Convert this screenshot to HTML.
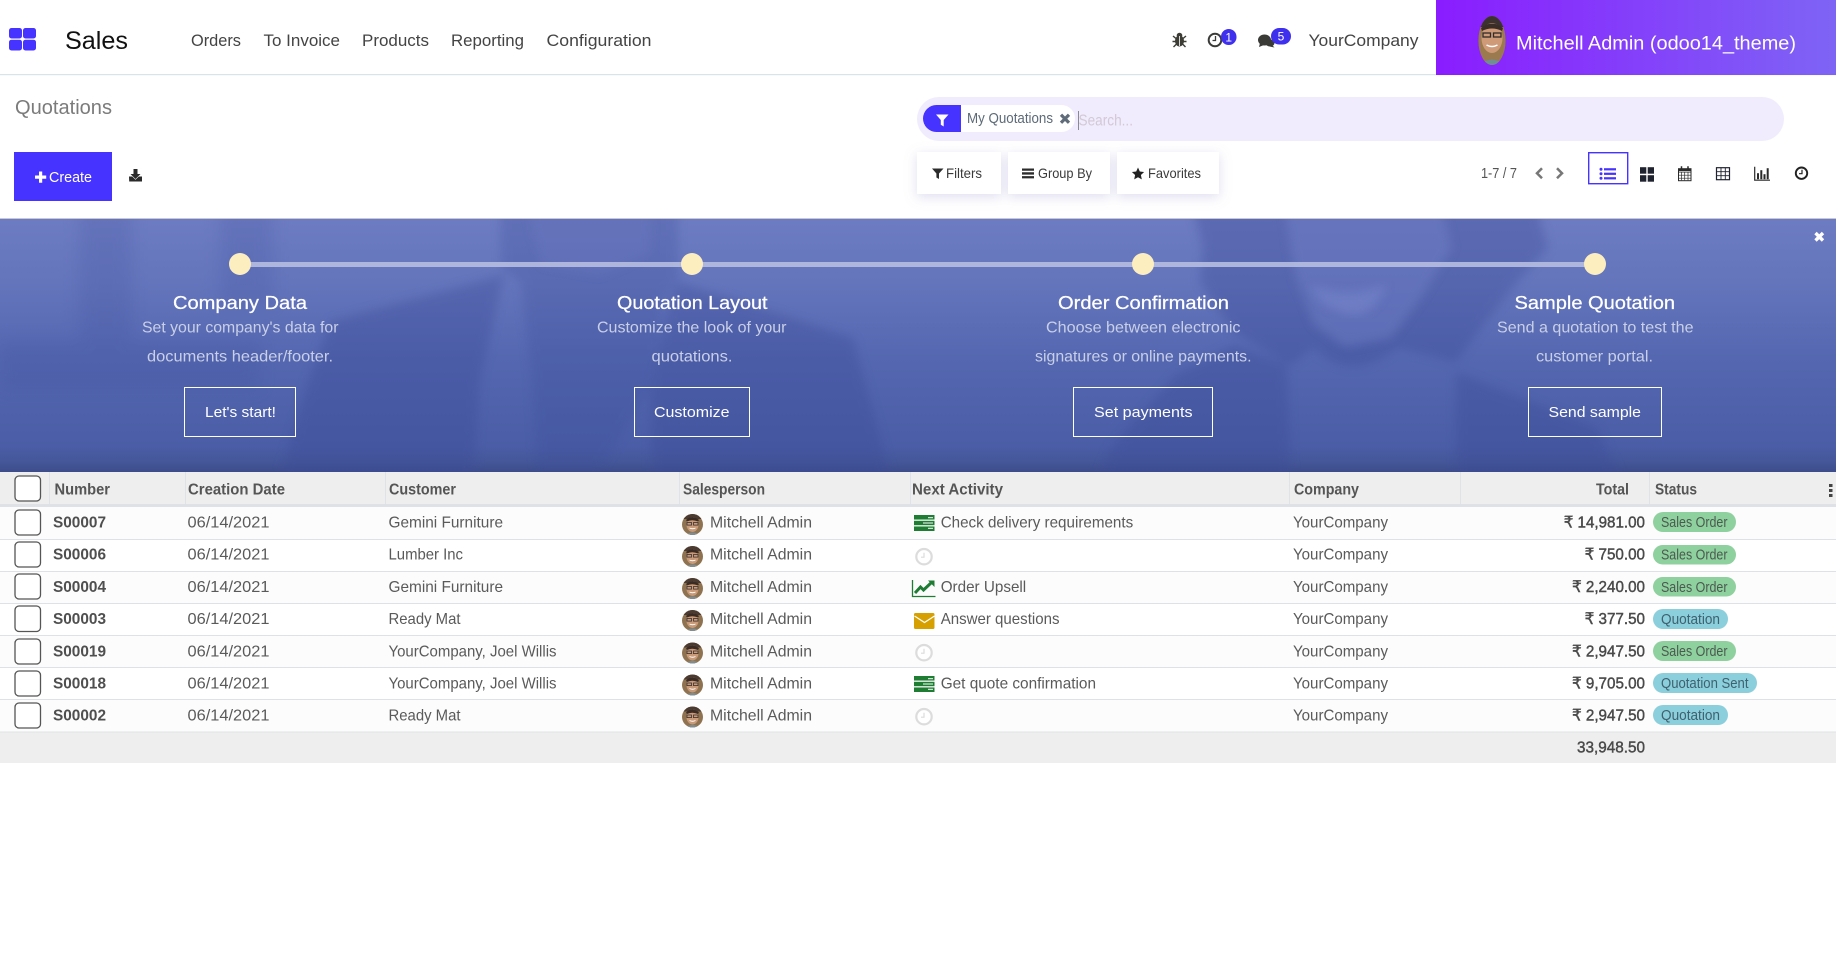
<!DOCTYPE html>
<html lang="en"><head><meta charset="utf-8"><title>Quotations - Sales</title>
<style>
html,body{margin:0;padding:0;background:#fff;width:1836px;height:970px;overflow:hidden}
svg{display:block;font-family:"Liberation Sans",sans-serif}
.menu{font-size:16.5px;fill:#444}
.bt{font-size:18.5px;fill:#fff;stroke:#fff;stroke-width:.25}
.bd{font-size:16px;fill:#c9cfe6}
.bb{font-size:15px;fill:#fff}
.th{font-size:15.5px;font-weight:bold;fill:#555}
.td{font-size:16px;fill:#5a5a5a}
.no{font-size:15.5px;font-weight:bold;fill:#4f4f4f}
.tot{font-size:16px;fill:#4a4a4a;stroke:#4a4a4a;stroke-width:.45}
.bdg{font-size:14.5px;fill:#4b5a50}
.bdq{font-size:14.5px;fill:#3f6170}
.cb{fill:#fff;stroke:#555;stroke-width:1.3}
.fb{font-size:14px;fill:#3a3a3a}
</style></head><body>
<svg width="1836" height="970" viewBox="0 0 1836 970" xmlns="http://www.w3.org/2000/svg">
<defs>
<linearGradient id="pg" x1="0" x2="1" y1="0" y2="0"><stop offset="0" stop-color="#8a1cff"/><stop offset="1" stop-color="#7e64f5"/></linearGradient>
<linearGradient id="bg" x1="0" x2="0" y1="0" y2="1"><stop offset="0" stop-color="#6d7cc2"/><stop offset=".25" stop-color="#6475bc"/><stop offset=".55" stop-color="#5467b0"/><stop offset=".9" stop-color="#4a5da6"/><stop offset=".96" stop-color="#455799"/><stop offset="1" stop-color="#3d4d8b"/></linearGradient>
<filter id="bl" x="-10%" y="-10%" width="120%" height="120%"><feGaussianBlur stdDeviation="5"/></filter>
<filter id="bl2" x="-10%" y="-10%" width="120%" height="120%"><feGaussianBlur stdDeviation="8"/></filter>
<filter id="sh" x="-30%" y="-30%" width="160%" height="170%"><feDropShadow dx="0" dy="3" stdDeviation="6" flood-color="#8a86c8" flood-opacity=".28"/></filter>
<clipPath id="bc"><rect x="0" y="219" width="1836" height="253"/></clipPath>
<clipPath id="ua"><ellipse cx="1492" cy="40.5" rx="13.6" ry="24.5"/></clipPath>
<clipPath id="sa"><circle cx="10.5" cy="10.5" r="10.5"/></clipPath>
<g id="av"><g clip-path="url(#sa)"><rect width="21" height="21" fill="#8f7350"/><rect x="0" y="0" width="21" height="5" fill="#4a3a30"/><ellipse cx="10.5" cy="10.5" rx="6" ry="7.5" fill="#c99a78"/><path d="M4 6Q10 0 17 6L16 7.500Q10 5 5 7.500Z" fill="#3a2c25"/><rect x="5" y="8.500" width="4.500" height="2.600" fill="none" stroke="#3a3030" stroke-width=".8"/><rect x="11.500" y="8.500" width="4.500" height="2.600" fill="none" stroke="#3a3030" stroke-width=".8"/><path d="M7.500 14q3 1.500 6 0" stroke="#fff" stroke-width=".9" fill="none"/><path d="M3 21q8-5 15 0z" fill="#7f8d92"/></g></g>
<g id="clk"><circle cx="0" cy="0" r="7.700" fill="#fff" stroke="#dcdcdc" stroke-width="2.200"/><path d="M0-4V0.500H-3" fill="none" stroke="#dcdcdc" stroke-width="1.200"/></g>
<g id="stack"><rect x="0" y="0" width="20.500" height="16" fill="#1e7d33"/><path d="M0 5.200h20.500M0 10.800h20.500" stroke="#e8f2ea" stroke-width="1.300"/><path d="M14 2.600h5M9 8h10M14 13.400h5" stroke="#cfe3d4" stroke-width="1.300"/></g>
</defs>

<!-- navbar -->
<rect x="0" y="74" width="1836" height="1.200" fill="#d8e3ea"/>
<g fill="#4733ff"><rect x="9" y="28" width="13" height="10.500" rx="2.500"/><rect x="23" y="28" width="13" height="10.500" rx="2.500"/><rect x="9" y="39.700" width="13" height="10.800" rx="2.500"/><rect x="23" y="39.700" width="13" height="10.800" rx="2.500"/></g>
<text x="65" y="49" font-size="25" fill="#111" textLength="63" lengthAdjust="spacingAndGlyphs">Sales</text>
<text class="menu" x="191" y="46" textLength="50" lengthAdjust="spacingAndGlyphs">Orders</text>
<text class="menu" x="263.500" y="46" textLength="76.500" lengthAdjust="spacingAndGlyphs">To Invoice</text>
<text class="menu" x="362" y="46" textLength="67" lengthAdjust="spacingAndGlyphs">Products</text>
<text class="menu" x="451" y="46" textLength="73" lengthAdjust="spacingAndGlyphs">Reporting</text>
<text class="menu" x="546.500" y="46" textLength="105" lengthAdjust="spacingAndGlyphs">Configuration</text>
<!-- bug -->
<g fill="#3d3d36"><ellipse cx="1179.500" cy="41" rx="4.500" ry="5.500"/><circle cx="1179.500" cy="35.500" r="2.800"/><path d="M1173 36l3 2.500M1186 36l-3 2.500M1172.500 41.500h3.500M1186.500 41.500h-3.500M1173.500 47l3-3M1185.500 47l-3-3" stroke="#3d3d36" stroke-width="1.400"/></g>
<path d="M1179.500 36v10" stroke="#fff" stroke-width=".8"/>
<!-- clock -->
<circle cx="1215" cy="40" r="6.300" fill="#fff" stroke="#3a3a36" stroke-width="2"/><path d="M1215.500 36v4.500h-3" stroke="#3a3a36" stroke-width="1.300" fill="none"/>
<rect x="1221" y="29" width="15.500" height="16" rx="7.700" fill="#3f30ee"/>
<text x="1228.700" y="41.500" font-size="12" fill="#fff" text-anchor="middle">1</text>
<!-- chat -->
<g fill="#3a3a36"><ellipse cx="1264.500" cy="40" rx="6.500" ry="5.500"/><path d="M1260 43l-1 4 5-2z"/><ellipse cx="1270" cy="43" rx="4.500" ry="3.500"/><path d="M1272 45l2.500 2.500-5-1z"/></g>
<rect x="1271" y="28" width="20" height="16.500" rx="8.200" fill="#3f30ee"/>
<text x="1281" y="40.500" font-size="12" fill="#fff" text-anchor="middle">5</text>
<text class="menu" x="1308.500" y="46" textLength="110" lengthAdjust="spacingAndGlyphs">YourCompany</text>
<rect x="1436" y="0" width="400" height="75" fill="url(#pg)"/>
<g clip-path="url(#ua)"><rect x="1477" y="15" width="30" height="52" fill="#9a7a4e"/><rect x="1477" y="15" width="30" height="12" fill="#3c3330"/><ellipse cx="1492" cy="38" rx="10.500" ry="15" fill="#cf9a78"/><path d="M1481 28q11-9 22 0l-1 3q-10-5-20 0z" fill="#3a2d28"/><rect x="1483" y="33" width="7.500" height="4" fill="none" stroke="#2f2b2c" stroke-width="1.300"/><rect x="1493.500" y="33" width="7.500" height="4" fill="none" stroke="#2f2b2c" stroke-width="1.300"/><path d="M1486.500 45q5.500 3 11 0" stroke="#fff" stroke-width="1.500" fill="none"/><path d="M1478 66q14-13 28 0z" fill="#6f8f92"/></g>
<text x="1516" y="49.500" font-size="19.500" fill="#fff" textLength="280" lengthAdjust="spacingAndGlyphs">Mitchell Admin (odoo14_theme)</text>

<!-- control panel -->
<text x="15" y="114" font-size="20.500" fill="#7b7b7b" textLength="97" lengthAdjust="spacingAndGlyphs">Quotations</text>
<rect x="14" y="152" width="98" height="49" fill="#4733ff"/>
<path d="M39 171.500h3.200v4h4v3.200h-4v4h-3.200v-4h-4v-3.200h4z" fill="#fff"/>
<text x="49" y="182" font-size="14.500" fill="#fff" textLength="43" lengthAdjust="spacingAndGlyphs">Create</text>
<path d="M133.500 169h4v5h3l-5 5-5-5h3zM129 176.500h3.200l3.300 3.300 3.300-3.300h3.200v5h-12.800z" fill="#2a2a2a"/>

<rect x="917" y="97" width="867" height="44" rx="22" fill="#f0ecfd"/>
<path d="M961 105h-24.500a13.500 13.500 0 0 0 0 27h24.500z" fill="#4733ff"/>
<path d="M961 105h100.500a13.500 13.500 0 0 1 0 27h-100.500z" fill="#fff"/>
<path d="M936 114.500h12.500l-4.800 5.500v6.500l-2.900-1.700v-4.800z" fill="#fff"/>
<text x="967" y="122.800" font-size="14.500" fill="#5d6a78" textLength="86" lengthAdjust="spacingAndGlyphs">My Quotations</text>
<path d="M1061 114.800l8 8M1069 114.800l-8 8" stroke="#5f6b78" stroke-width="3.200"/>
<rect x="1078" y="111" width="1" height="19" fill="#8a8a92"/>
<text x="1078.500" y="125.500" font-size="15.500" fill="#d3c9d6" textLength="54.500" lengthAdjust="spacingAndGlyphs">Search...</text>

<g fill="#fff" filter="url(#sh)"><rect x="917" y="152" width="84" height="42"/><rect x="1008" y="152" width="102" height="42"/><rect x="1117" y="152" width="102" height="42"/></g>
<path d="M932 168.500h11.500l-4.500 5v5.500l-2.600-1.500v-4z" fill="#2c2c2c"/>
<text class="fb" x="946" y="178" textLength="36" lengthAdjust="spacingAndGlyphs">Filters</text>
<path d="M1022 168.500h12v2.300h-12zM1022 172.300h12v2.300h-12zM1022 176.100h12v2.300h-12z" fill="#2c2c2c"/>
<text class="fb" x="1038" y="178" textLength="54" lengthAdjust="spacingAndGlyphs">Group By</text>
<path d="M1138 167.500l1.800 4 4.300.5-3.200 3 .9 4.400-3.800-2.200-3.800 2.200.9-4.400-3.200-3 4.300-.5z" fill="#222"/>
<text class="fb" x="1148" y="178" textLength="53" lengthAdjust="spacingAndGlyphs">Favorites</text>

<text x="1481" y="178" font-size="14.500" fill="#555" textLength="36" lengthAdjust="spacingAndGlyphs">1-7 / 7</text>
<rect x="1588.700" y="152.700" width="39" height="31" fill="#fff" stroke="#4733ff" stroke-width="1.400"/>
<g transform="translate(0,-.8)">
<path d="M1542 169l-5 5 5 5M1557 169l5 5-5 5" fill="none" stroke="#777" stroke-width="2.500"/>
<g fill="#4733ff"><rect x="1604" y="169" width="12" height="2.200"/><rect x="1604" y="173.500" width="12" height="2.200"/><rect x="1604" y="178" width="12" height="2.200"/><circle cx="1601" cy="170" r="1.500"/><circle cx="1601" cy="174.500" r="1.500"/><circle cx="1601" cy="179" r="1.500"/></g>
<g fill="#1f2330"><rect x="1640" y="168" width="6.300" height="6.500"/><rect x="1647.700" y="168" width="6.300" height="6.500"/><rect x="1640" y="176" width="6.300" height="6.500"/><rect x="1647.700" y="176" width="6.300" height="6.500"/></g>
<g fill="none" stroke="#2a2a2a"><rect x="1678.500" y="169.500" width="12.500" height="12" stroke-width="1"/><path d="M1678.500 173h12.500M1678.500 176h12.500M1678.500 179h12.500M1681.500 173v8M1684.700 173v8M1688 173v8" stroke-width=".7"/><path d="M1681.500 167v4M1688 167v4" stroke-width="1.500"/></g>
<rect x="1678.500" y="169.500" width="12.500" height="2.500" fill="#2a2a2a"/>
<g fill="none" stroke="#1f2330"><rect x="1716.500" y="168.500" width="13" height="12" stroke-width="1.200"/><path d="M1716.500 172.500h13M1716.500 176.500h13M1721 168.500v12M1725.300 168.500v12" stroke-width=".9"/></g>
<path d="M1754.700 167.500v13.500h15.300" fill="none" stroke="#2a2a2a" stroke-width="1.200"/>
<g fill="#2a2a2a"><rect x="1757" y="174" width="2" height="6"/><rect x="1760.300" y="171" width="2" height="9"/><rect x="1763.500" y="175" width="2" height="5"/><rect x="1766.700" y="169" width="2" height="11"/></g>
<circle cx="1801.500" cy="174" r="5.700" fill="#fff" stroke="#222" stroke-width="1.900"/><path d="M1802 170.500v4h-3" fill="none" stroke="#222" stroke-width="1.200"/>
</g>

<!-- banner -->
<rect x="0" y="218" width="1836" height="1" fill="#c9c9cf"/>
<rect x="0" y="219" width="1836" height="253" fill="url(#bg)"/>
<g clip-path="url(#bc)">
<g filter="url(#bl2)" fill="#3f4f9c" opacity=".2">
<rect x="79" y="205" width="53" height="140"/>
<rect x="0" y="340" width="260" height="50"/>
<rect x="220" y="205" width="53" height="100"/>
</g>
<g filter="url(#bl)" fill="#3c4b98" opacity=".36">
<path d="M500 205h178v75l-15 20-8 80-56 92h-62l-6-100-10-90-20-15z" opacity=".7"/>
<path d="M504 275L330 322 308 382 277 485H473L480 380 500 290z"/>
<path d="M678 282L853 338 893 485H652L650 390 670 300z"/>
<path d="M1192 205L1203 248 1200 282 1234 332 1290 365 1314 348 1398 348 1456 362 1483 325 1517 282 1548 248 1536 205z"/>
<path d="M1176 375L1111 448 1095 485H1291L1287 365 1234 345z"/>
<path d="M1456 372L1597 428 1624 485H1456z"/>
<path d="M1314 348Q1350 385 1398 348L1390 335 1330 335z"/>
</g>
<g filter="url(#bl)" fill="#7786cc" opacity=".4">
<path d="M1284 205H1441L1452 248 1421 298 1391 338 1345 347 1314 325 1295 275z"/>
<path d="M527 205H652L650 255 600 275 540 265z" opacity=".5"/>
</g>
<path d="M1310 285Q1350 300 1387 284 1370 325 1340 312 1318 305 1310 285z" fill="#7f8dd0" opacity=".45" filter="url(#bl)"/>
</g>
<rect x="240" y="262" width="1355" height="5" fill="#b5bce0" opacity=".92"/>
<g fill="#fdeec0"><circle cx="240" cy="264" r="11"/><circle cx="692" cy="264" r="11"/><circle cx="1143" cy="264" r="11"/><circle cx="1595" cy="264" r="11"/></g>
<text class="bt" x="173" y="309" textLength="134" lengthAdjust="spacingAndGlyphs">Company Data</text>
<text class="bt" x="617" y="309" textLength="150.500" lengthAdjust="spacingAndGlyphs">Quotation Layout</text>
<text class="bt" x="1058" y="309" textLength="171" lengthAdjust="spacingAndGlyphs">Order Confirmation</text>
<text class="bt" x="1514.500" y="309" textLength="160.500" lengthAdjust="spacingAndGlyphs">Sample Quotation</text>
<text class="bd" x="142" y="332.500" textLength="196.500" lengthAdjust="spacingAndGlyphs">Set your company's data for</text>
<text class="bd" x="147" y="361.500" textLength="186" lengthAdjust="spacingAndGlyphs">documents header/footer.</text>
<text class="bd" x="597" y="332.500" textLength="189.500" lengthAdjust="spacingAndGlyphs">Customize the look of your</text>
<text class="bd" x="651.500" y="361.500" textLength="81" lengthAdjust="spacingAndGlyphs">quotations.</text>
<text class="bd" x="1046" y="332.500" textLength="194.500" lengthAdjust="spacingAndGlyphs">Choose between electronic</text>
<text class="bd" x="1035" y="361.500" textLength="216.500" lengthAdjust="spacingAndGlyphs">signatures or online payments.</text>
<text class="bd" x="1497" y="332.500" textLength="196.500" lengthAdjust="spacingAndGlyphs">Send a quotation to test the</text>
<text class="bd" x="1536" y="361.500" textLength="117" lengthAdjust="spacingAndGlyphs">customer portal.</text>
<g fill="none" stroke="#fff" stroke-width="1"><rect x="184.500" y="387.500" width="111" height="49"/><rect x="634.500" y="387.500" width="115" height="49"/><rect x="1073.500" y="387.500" width="139" height="49"/><rect x="1528.500" y="387.500" width="133" height="49"/></g>
<text class="bb" x="205" y="417" textLength="71" lengthAdjust="spacingAndGlyphs">Let's start!</text>
<text class="bb" x="654" y="417" textLength="75.500" lengthAdjust="spacingAndGlyphs">Customize</text>
<text class="bb" x="1094" y="417" textLength="98.500" lengthAdjust="spacingAndGlyphs">Set payments</text>
<text class="bb" x="1548.500" y="417" textLength="92.500" lengthAdjust="spacingAndGlyphs">Send sample</text>
<path d="M1815.500 233l7.500 7.500M1823 233l-7.500 7.500" stroke="#fff" stroke-width="3.400"/>

<!-- table -->
<rect x="0" y="472" width="1836" height="32" fill="#eeeeee"/>
<rect x="0" y="504" width="1836" height="3" fill="#dee2e6"/>
<g fill="#dfe2e6"><rect x="49" y="472" width="1" height="32"/><rect x="185" y="472" width="1" height="32"/><rect x="385" y="472" width="1" height="32"/><rect x="679" y="472" width="1" height="32"/><rect x="910" y="472" width="1" height="32"/><rect x="1289" y="472" width="1" height="32"/><rect x="1460" y="472" width="1" height="32"/><rect x="1649" y="472" width="1" height="32"/></g>
<rect x="0" y="507" width="1836" height="32" fill="#fcfcfc"/>
<rect x="0" y="571" width="1836" height="32" fill="#fcfcfc"/>
<rect x="0" y="635" width="1836" height="32" fill="#fcfcfc"/>
<rect x="0" y="699" width="1836" height="33" fill="#fcfcfc"/>
<g fill="#dee2e6"><rect x="0" y="539" width="1836" height="1"/><rect x="0" y="571" width="1836" height="1"/><rect x="0" y="603" width="1836" height="1"/><rect x="0" y="635" width="1836" height="1"/><rect x="0" y="667" width="1836" height="1"/><rect x="0" y="699" width="1836" height="1"/></g>
<rect x="0" y="732.500" width="1836" height="30.500" fill="#eeeeee"/>
<rect x="0" y="731.500" width="1836" height="1" fill="#dee2e6"/>

<g><rect class="cb" x="15" y="476" width="25.500" height="25" rx="4"/><rect class="cb" x="15" y="510" width="25.500" height="25" rx="4"/><rect class="cb" x="15" y="542" width="25.500" height="25" rx="4"/><rect class="cb" x="15" y="574" width="25.500" height="25" rx="4"/><rect class="cb" x="15" y="606" width="25.500" height="25.500" rx="4"/><rect class="cb" x="15" y="639" width="25.500" height="25" rx="4"/><rect class="cb" x="15" y="671" width="25.500" height="25" rx="4"/><rect class="cb" x="15" y="703" width="25.500" height="25" rx="4"/></g>

<text class="th" x="54.500" y="494.500" textLength="55.500" lengthAdjust="spacingAndGlyphs">Number</text>
<text class="th" x="188" y="494.500" textLength="97" lengthAdjust="spacingAndGlyphs">Creation Date</text>
<text class="th" x="389" y="494.500" textLength="67" lengthAdjust="spacingAndGlyphs">Customer</text>
<text class="th" x="683" y="494.500" textLength="82" lengthAdjust="spacingAndGlyphs">Salesperson</text>
<text class="th" x="912" y="494.500" textLength="91" lengthAdjust="spacingAndGlyphs">Next Activity</text>
<text class="th" x="1294" y="494.500" textLength="65" lengthAdjust="spacingAndGlyphs">Company</text>
<text class="th" x="1596" y="494.500" textLength="33" lengthAdjust="spacingAndGlyphs">Total</text>
<text class="th" x="1655" y="494.500" textLength="42" lengthAdjust="spacingAndGlyphs">Status</text>
<g fill="#444"><rect x="1829" y="484" width="3.500" height="3"/><rect x="1829" y="489" width="3.500" height="3"/><rect x="1829" y="494" width="3.500" height="3"/></g>

<g transform="translate(0,-.5)">
<!-- number column -->
<text class="no" x="53" y="528" textLength="53" lengthAdjust="spacingAndGlyphs">S00007</text>
<text class="no" x="53" y="560" textLength="53" lengthAdjust="spacingAndGlyphs">S00006</text>
<text class="no" x="53" y="592.500" textLength="53" lengthAdjust="spacingAndGlyphs">S00004</text>
<text class="no" x="53" y="624.500" textLength="53" lengthAdjust="spacingAndGlyphs">S00003</text>
<text class="no" x="53" y="657" textLength="53" lengthAdjust="spacingAndGlyphs">S00019</text>
<text class="no" x="53" y="689" textLength="53" lengthAdjust="spacingAndGlyphs">S00018</text>
<text class="no" x="53" y="721" textLength="53" lengthAdjust="spacingAndGlyphs">S00002</text>
<!-- dates -->
<text class="td" x="187.500" y="528" textLength="82" lengthAdjust="spacingAndGlyphs">06/14/2021</text>
<text class="td" x="187.500" y="560" textLength="82" lengthAdjust="spacingAndGlyphs">06/14/2021</text>
<text class="td" x="187.500" y="592.500" textLength="82" lengthAdjust="spacingAndGlyphs">06/14/2021</text>
<text class="td" x="187.500" y="624.500" textLength="82" lengthAdjust="spacingAndGlyphs">06/14/2021</text>
<text class="td" x="187.500" y="657" textLength="82" lengthAdjust="spacingAndGlyphs">06/14/2021</text>
<text class="td" x="187.500" y="689" textLength="82" lengthAdjust="spacingAndGlyphs">06/14/2021</text>
<text class="td" x="187.500" y="721" textLength="82" lengthAdjust="spacingAndGlyphs">06/14/2021</text>
<!-- customers -->
<text class="td" x="388.500" y="528" textLength="114.500" lengthAdjust="spacingAndGlyphs">Gemini Furniture</text>
<text class="td" x="388.500" y="560" textLength="74.500" lengthAdjust="spacingAndGlyphs">Lumber Inc</text>
<text class="td" x="388.500" y="592.500" textLength="114.500" lengthAdjust="spacingAndGlyphs">Gemini Furniture</text>
<text class="td" x="388.500" y="624.500" textLength="72" lengthAdjust="spacingAndGlyphs">Ready Mat</text>
<text class="td" x="388.500" y="657" textLength="168" lengthAdjust="spacingAndGlyphs">YourCompany, Joel Willis</text>
<text class="td" x="388.500" y="689" textLength="168" lengthAdjust="spacingAndGlyphs">YourCompany, Joel Willis</text>
<text class="td" x="388.500" y="721" textLength="72" lengthAdjust="spacingAndGlyphs">Ready Mat</text>
<!-- salesperson names -->
<text class="td" x="710" y="528" textLength="102" lengthAdjust="spacingAndGlyphs">Mitchell Admin</text>
<text class="td" x="710" y="560" textLength="102" lengthAdjust="spacingAndGlyphs">Mitchell Admin</text>
<text class="td" x="710" y="592.500" textLength="102" lengthAdjust="spacingAndGlyphs">Mitchell Admin</text>
<text class="td" x="710" y="624.500" textLength="102" lengthAdjust="spacingAndGlyphs">Mitchell Admin</text>
<text class="td" x="710" y="657" textLength="102" lengthAdjust="spacingAndGlyphs">Mitchell Admin</text>
<text class="td" x="710" y="689" textLength="102" lengthAdjust="spacingAndGlyphs">Mitchell Admin</text>
<text class="td" x="710" y="721" textLength="102" lengthAdjust="spacingAndGlyphs">Mitchell Admin</text>
<!-- activity text -->
<text class="td" x="940.700" y="528" textLength="192.500" lengthAdjust="spacingAndGlyphs">Check delivery requirements</text>
<text class="td" x="940.700" y="592.500" textLength="85.500" lengthAdjust="spacingAndGlyphs">Order Upsell</text>
<text class="td" x="940.700" y="624.500" textLength="118.800" lengthAdjust="spacingAndGlyphs">Answer questions</text>
<text class="td" x="940.700" y="689" textLength="155.300" lengthAdjust="spacingAndGlyphs">Get quote confirmation</text>
<!-- company -->
<text class="td" x="1293" y="528" textLength="95" lengthAdjust="spacingAndGlyphs">YourCompany</text>
<text class="td" x="1293" y="560" textLength="95" lengthAdjust="spacingAndGlyphs">YourCompany</text>
<text class="td" x="1293" y="592.500" textLength="95" lengthAdjust="spacingAndGlyphs">YourCompany</text>
<text class="td" x="1293" y="624.500" textLength="95" lengthAdjust="spacingAndGlyphs">YourCompany</text>
<text class="td" x="1293" y="657" textLength="95" lengthAdjust="spacingAndGlyphs">YourCompany</text>
<text class="td" x="1293" y="689" textLength="95" lengthAdjust="spacingAndGlyphs">YourCompany</text>
<text class="td" x="1293" y="721" textLength="95" lengthAdjust="spacingAndGlyphs">YourCompany</text>
<!-- totals -->
<text class="tot" x="1563.700" y="528" textLength="81.300" lengthAdjust="spacingAndGlyphs">₹ 14,981.00</text>
<text class="tot" x="1584.600" y="560" textLength="60.400" lengthAdjust="spacingAndGlyphs">₹ 750.00</text>
<text class="tot" x="1572" y="592.500" textLength="73" lengthAdjust="spacingAndGlyphs">₹ 2,240.00</text>
<text class="tot" x="1584.600" y="624.500" textLength="60.400" lengthAdjust="spacingAndGlyphs">₹ 377.50</text>
<text class="tot" x="1572" y="657" textLength="73" lengthAdjust="spacingAndGlyphs">₹ 2,947.50</text>
<text class="tot" x="1572" y="689" textLength="73" lengthAdjust="spacingAndGlyphs">₹ 9,705.00</text>
<text class="tot" x="1572" y="721" textLength="73" lengthAdjust="spacingAndGlyphs">₹ 2,947.50</text>
<text class="tot" x="1577" y="753" textLength="68" lengthAdjust="spacingAndGlyphs">33,948.50</text>
</g>
<!-- avatars -->
<use href="#av" x="682" y="514"/><use href="#av" x="682" y="546"/><use href="#av" x="682" y="578"/><use href="#av" x="682" y="610"/><use href="#av" x="682" y="642.500"/><use href="#av" x="682" y="674.500"/><use href="#av" x="682" y="706.500"/>
<!-- activity icons -->
<use href="#stack" x="914" y="515"/>
<use href="#clk" x="924" y="556.700"/>
<path d="M912.500 580v16.500h23" fill="none" stroke="#1e7d33" stroke-width="1.300"/><path d="M915 593l5.500-6 3 3 8-7.500" fill="none" stroke="#1e7d33" stroke-width="3"/><path d="M928 580.500h6.500v6.500z" fill="#1e7d33"/>
<rect x="914" y="613" width="20.500" height="16" rx="1.500" fill="#d6a000"/><path d="M914.500 616l10 6.500 10-6.500" fill="none" stroke="#fff" stroke-width="1.300"/>
<use href="#clk" x="924" y="652.700"/>
<use href="#stack" x="914" y="676"/>
<use href="#clk" x="924" y="716.700"/>
<!-- status -->
<g fill="#8fd19e"><rect x="1653" y="512" width="83" height="20" rx="10"/><rect x="1653" y="545" width="83" height="19.500" rx="9.700"/><rect x="1653" y="577" width="83" height="19.500" rx="9.700"/><rect x="1653" y="641" width="83" height="20" rx="10"/></g>
<g fill="#8acfdb"><rect x="1653" y="609" width="75" height="20" rx="10"/><rect x="1653" y="673" width="104" height="20" rx="10"/><rect x="1653" y="705" width="75" height="20" rx="10"/></g>
<text class="bdg" x="1661" y="527" textLength="66.500" lengthAdjust="spacingAndGlyphs">Sales Order</text>
<text class="bdg" x="1661" y="559.500" textLength="66.500" lengthAdjust="spacingAndGlyphs">Sales Order</text>
<text class="bdg" x="1661" y="592" textLength="66.500" lengthAdjust="spacingAndGlyphs">Sales Order</text>
<text class="bdq" x="1661" y="624" textLength="59" lengthAdjust="spacingAndGlyphs">Quotation</text>
<text class="bdg" x="1661" y="656" textLength="66.500" lengthAdjust="spacingAndGlyphs">Sales Order</text>
<text class="bdq" x="1661" y="688" textLength="87.500" lengthAdjust="spacingAndGlyphs">Quotation Sent</text>
<text class="bdq" x="1661" y="720" textLength="59" lengthAdjust="spacingAndGlyphs">Quotation</text>
</svg>
</body></html>
